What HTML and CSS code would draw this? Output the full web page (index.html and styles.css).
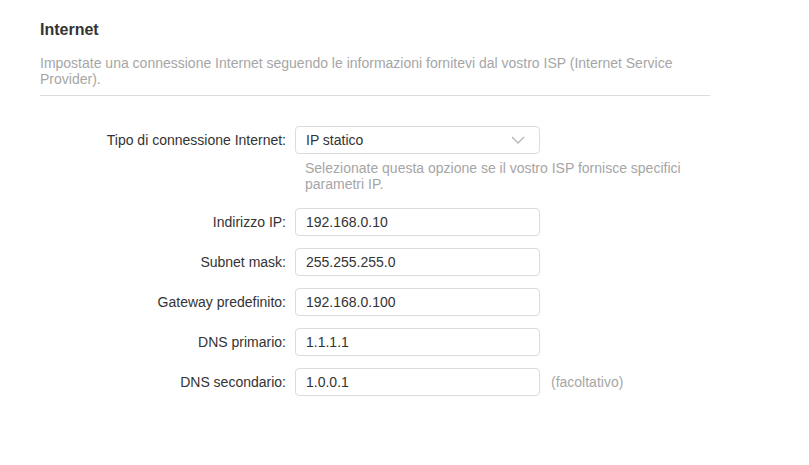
FILE: index.html
```html
<!DOCTYPE html>
<html lang="it">
<head>
<meta charset="utf-8">
<link rel="stylesheet" href="styles.css">
</head>
<body>
<div class="panel">
  <h2 class="title">Internet</h2>
  <p class="desc">Impostate una connessione Internet seguendo le informazioni fornitevi dal vostro ISP (Internet Service Provider).</p>
  <div class="divider"></div>
  <div class="form">
    <div class="row">
      <label class="label">Tipo di connessione Internet:</label>
      <div class="field">
        <div class="select">
          <span>IP statico</span>
          <svg class="chev" width="14" height="8" viewBox="0 0 14 8"><path d="M1 1 L7 7 L13 1" fill="none" stroke="#b5b5b5" stroke-width="1.3"/></svg>
        </div>
        <div class="hint">Selezionate questa opzione se il vostro ISP fornisce specifici parametri IP.</div>
      </div>
    </div>
    <div class="row">
      <label class="label">Indirizzo IP:</label>
      <div class="field"><div class="input">192.168.0.10</div></div>
    </div>
    <div class="row">
      <label class="label">Subnet mask:</label>
      <div class="field"><div class="input">255.255.255.0</div></div>
    </div>
    <div class="row">
      <label class="label">Gateway predefinito:</label>
      <div class="field"><div class="input">192.168.0.100</div></div>
    </div>
    <div class="row">
      <label class="label">DNS primario:</label>
      <div class="field"><div class="input">1.1.1.1</div></div>
    </div>
    <div class="row">
      <label class="label">DNS secondario:</label>
      <div class="field inline"><div class="input">1.0.0.1</div><span class="opt">(facoltativo)</span></div>
    </div>
  </div>
</div>
</body>
</html>
```
FILE: styles.css
```css
* { box-sizing: border-box; }
html, body { margin: 0; background: #fff; }
body {
  font-family: "Liberation Sans", Arial, sans-serif;
  font-size: 14px;
  color: #333;
}
.panel {
  width: 710px;
  padding: 20px 0 0 40px;
}
.title {
  margin: 0;
  font-size: 16px;
  line-height: 19px;
  font-weight: bold;
  color: #333;
}
.desc {
  margin: 16px 0 0;
  line-height: 16px;
  color: #a6a6a6;
}
.divider {
  margin-top: 8px;
  height: 1px;
  background: #dcdcdc;
}
.form {
  padding-top: 30px;
  display: flex;
  flex-direction: column;
  gap: 12px;
}
.row {
  display: grid;
  grid-template-columns: 246px auto;
  column-gap: 9px;
  align-items: start;
}
.label {
  text-align: right;
  line-height: 28px;
  color: #333;
}
.field { display: flex; flex-direction: column; }
.field.inline { flex-direction: row; align-items: center; gap: 11px; }
.select, .input {
  width: 245px;
  height: 28px;
  border: 1px solid #dcdcdc;
  border-radius: 4px;
  padding: 0 10px;
  display: flex;
  align-items: center;
  color: #333;
}
.select { justify-content: space-between; padding-right: 14px; }
.chev { display: block; }
.hint {
  width: 390px;
  padding: 6px 0 4px 10px;
  line-height: 16px;
  color: #a6a6a6;
}
.opt { color: #a6a6a6; }
```
